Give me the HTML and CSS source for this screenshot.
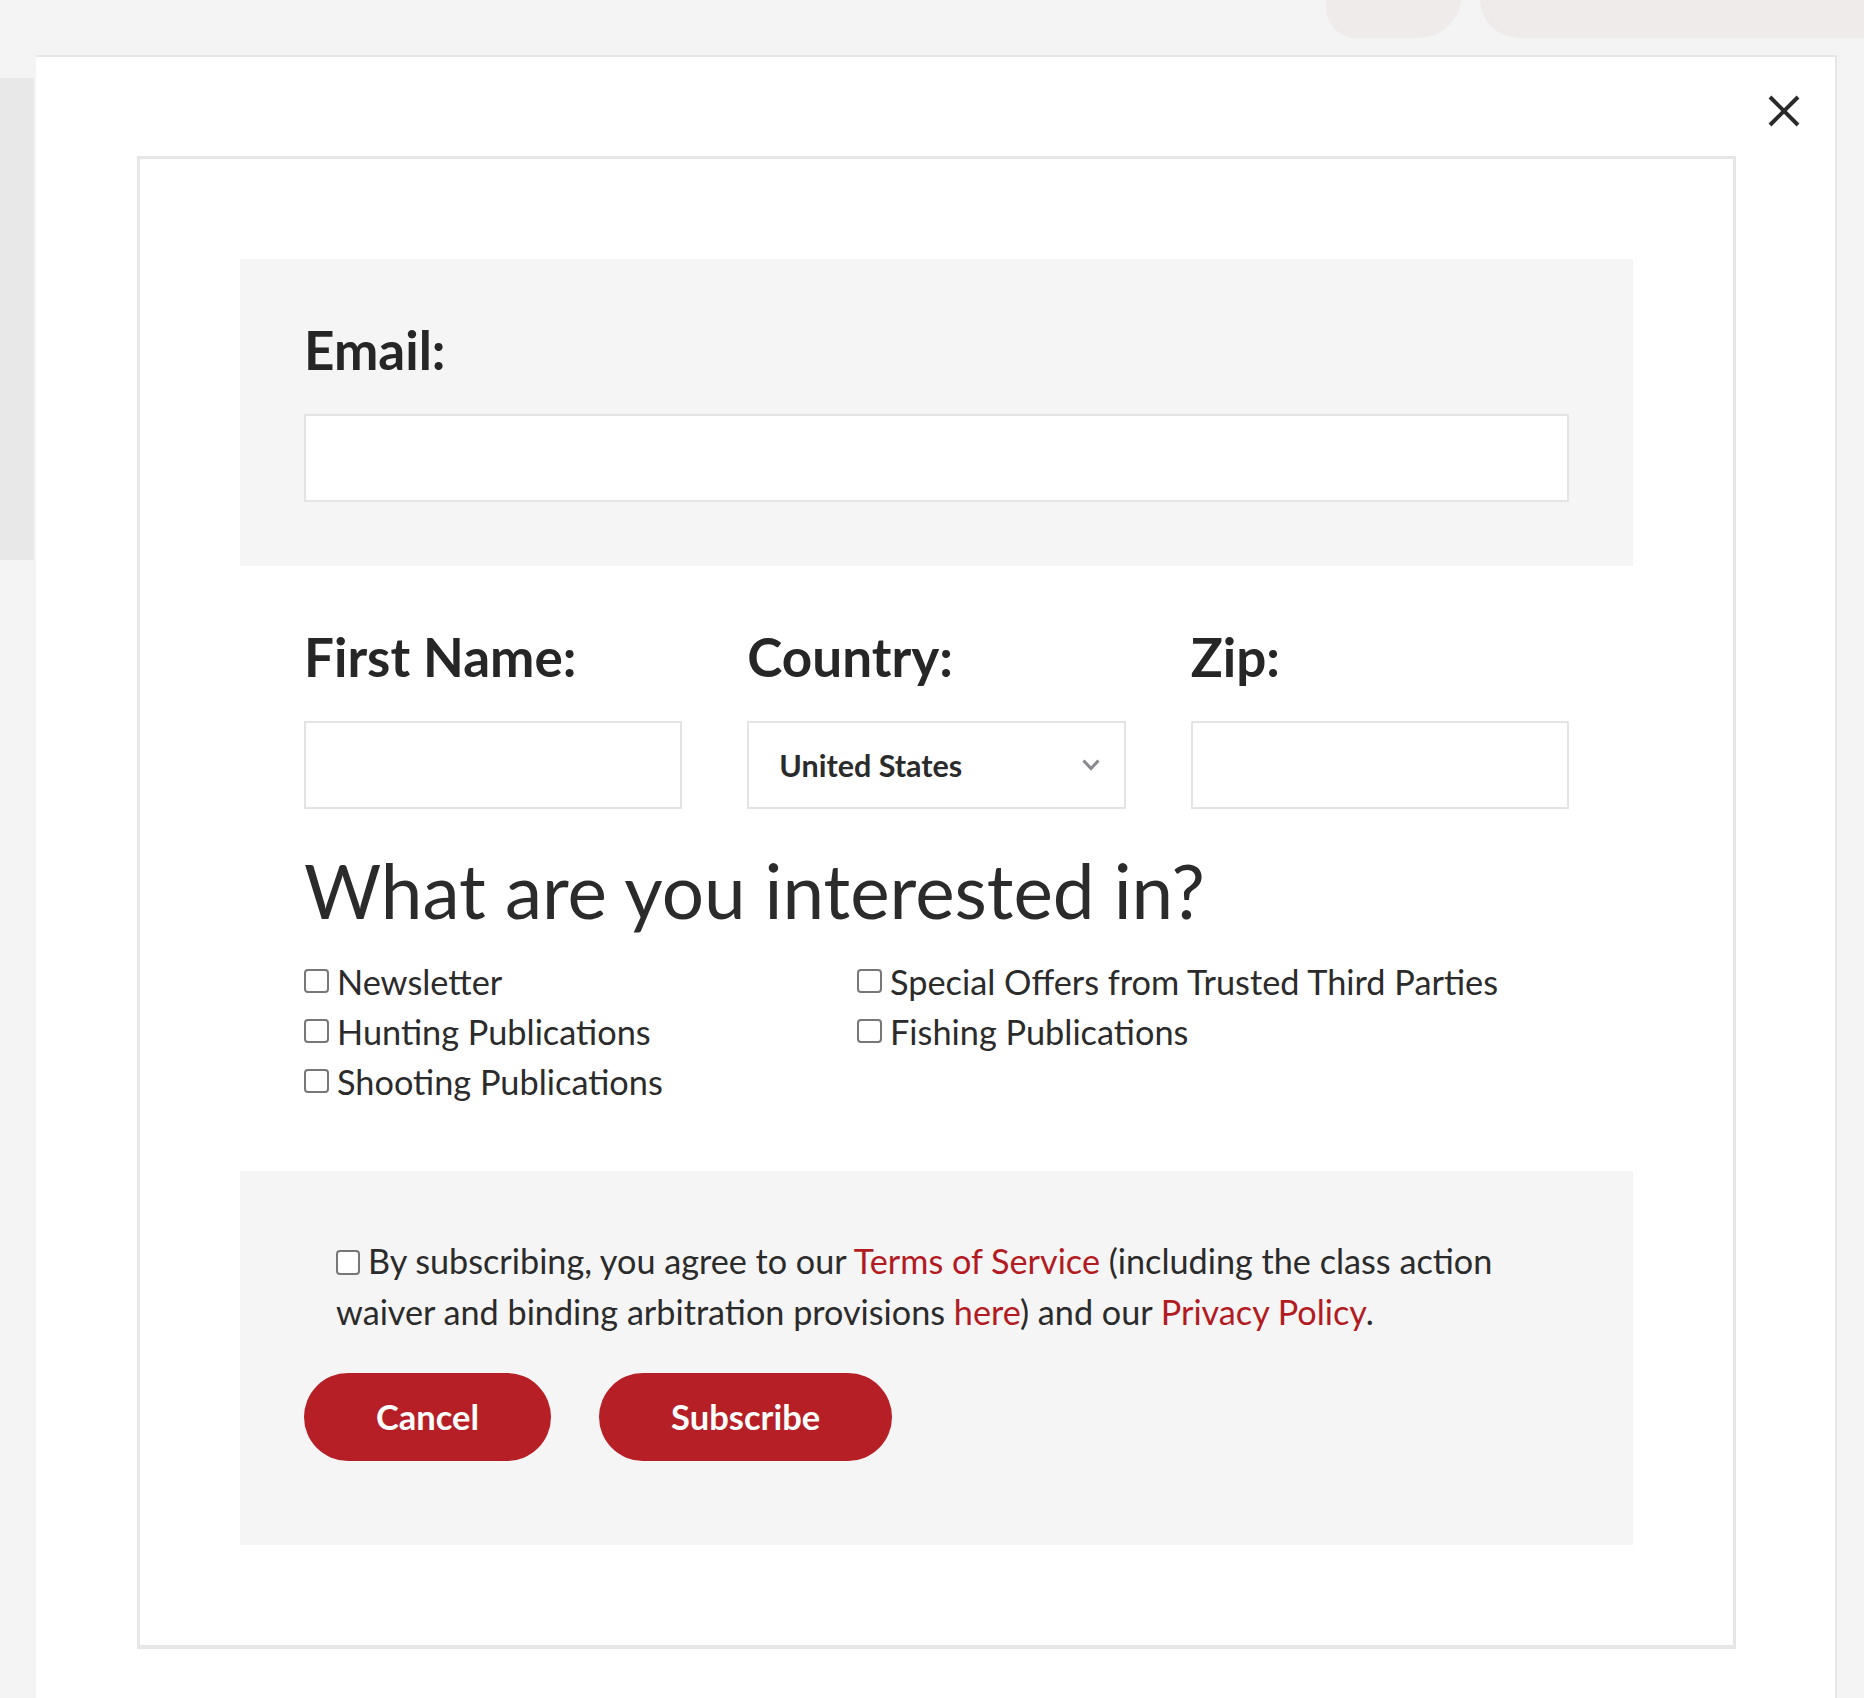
FILE: index.html
```html
<!DOCTYPE html>
<html lang="en">
<head>
<meta charset="utf-8">
<title>Subscribe</title>
<link rel="stylesheet" href="styles.css">
</head>
<body>
<div class="backdrop">
  <div class="bg-side"></div>
  <div class="bg-pill bg-pill-a"></div>
  <div class="bg-pill bg-pill-b"></div>
</div>
<div class="modal">
  <button class="close" type="button" aria-label="Close">
    <svg width="32" height="32" viewBox="0 0 32 32"><path d="M2 2 L30 30 M30 2 L2 30" stroke="#2a2a2a" stroke-width="4" fill="none"/></svg>
  </button>
  <div class="frame">
    <form class="form">
      <div class="panel panel-grey">
        <label class="field-label" for="email">Email:</label>
        <div class="text-input" id="email"></div>
      </div>
      <div class="panel panel-white">
        <div class="row3">
          <div class="field">
            <label class="field-label">First Name:</label>
            <div class="text-input"></div>
          </div>
          <div class="field">
            <label class="field-label">Country:</label>
            <div class="select">
              <span class="select-value">United States</span>
              <svg class="chevron" width="18" height="12" viewBox="0 0 18 12"><path d="M1.5 1.5 L9 9.5 L16.5 1.5" stroke="#8a8a8e" stroke-width="3" fill="none"/></svg>
            </div>
          </div>
          <div class="field">
            <label class="field-label">Zip:</label>
            <div class="text-input"></div>
          </div>
        </div>
        <h2 class="interest-title">What are you interested in?</h2>
        <div class="interests">
          <label class="check"><span class="box"></span>Newsletter</label>
          <label class="check"><span class="box"></span>Special Offers from Trusted Third Parties</label>
          <label class="check"><span class="box"></span>Hunting Publications</label>
          <label class="check"><span class="box"></span>Fishing Publications</label>
          <label class="check"><span class="box"></span>Shooting Publications</label>
        </div>
      </div>
      <div class="panel panel-grey panel-terms">
        <p class="terms"><span class="box box-terms"></span>By subscribing, you agree to our <a href="#">Terms of Service</a> (including the class action waiver and binding arbitration provisions <a href="#">here</a>) and our <a href="#">Privacy Policy</a>.</p>
        <div class="buttons">
          <button class="btn" type="button">Cancel</button>
          <button class="btn" type="button">Subscribe</button>
        </div>
      </div>
    </form>
  </div>
</div>
</body>
</html>
```

FILE: styles.css
```css
* { box-sizing: border-box; }
html, body { margin: 0; padding: 0; }
body {
  width: 1864px;
  height: 1698px;
  overflow: hidden;
  background: #f4f4f4;
  font-family: Lato, "Open Sans", sans-serif;
  color: #2b2b2b;
  position: relative;
}
.backdrop { position: absolute; left: 0; top: 0; right: 0; bottom: 0; }
.bg-side { position: absolute; left: 0; top: 78px; width: 34px; height: 482px; background: #e8e8e8; }
.bg-pill { position: absolute; top: -40px; height: 78px; background: #eeebea; }
.bg-pill-a { left: 1326px; width: 136px; border-radius: 0 0 44px 30px; }
.bg-pill-b { left: 1480px; width: 440px; border-radius: 44px; }

.modal {
  position: relative;
  margin: 55px 0 0 36px;
  width: 1801px;
  min-height: 1700px;
  background: #fff;
  border-top: 2px solid #e6e6e6;
  border-right: 2px solid #e6e6e6;
  padding: 99px 99px 100px 101px;
}
.close {
  position: absolute;
  right: 35px;
  top: 38px;
  width: 32px;
  height: 32px;
  padding: 0;
  border: 0;
  background: none;
  display: block;
}
.close svg { display: block; }

.frame {
  border: 3px solid #e6e6e6;
  box-shadow: 0 1px 0 #e6e6e6;
  padding: 100px;
}
.form { margin: 0; }
.panel { padding: 64px; }
.panel-grey { background: #f5f5f5; }

.field-label {
  display: block;
  font-weight: 700;
  font-size: 53px;
  line-height: 1;
  color: #262626;
  margin-bottom: 38px;
}
.text-input {
  height: 88px;
  background: #fff;
  border: 2px solid #e4e4e4;
}
.row3 {
  display: grid;
  grid-template-columns: repeat(3, 1fr);
  column-gap: 65px;
}
.select {
  height: 88px;
  background: #fff;
  border: 2px solid #e4e4e4;
  display: flex;
  align-items: center;
  justify-content: space-between;
  padding: 0 24px 0 30px;
}
.select-value { font-weight: 700; font-size: 30.5px; color: #2b2b2b; }
.chevron { display: block; }

.interest-title {
  font-weight: 400;
  font-size: 74.6px;
  line-height: 1;
  margin: 44px 0 29px;
  color: #2b2b2b;
}
.interests {
  display: grid;
  grid-template-columns: 553px 1fr;
}
.check {
  display: block;
  font-size: 34.3px;
  line-height: 50px;
  color: #2b2b2b;
  white-space: nowrap;
}
.box {
  display: inline-block;
  width: 25px;
  height: 24px;
  border: 2px solid #777;
  border-radius: 4px;
  background: #fff;
  margin-right: 8px;
  vertical-align: 2px;
}
.panel-terms { padding-bottom: 84px; }
.terms {
  margin: 0;
  padding: 0 0 0 32px;
  font-size: 34.2px;
  line-height: 51px;
  color: #2b2b2b;
}
.box-terms { width: 24px; height: 25px; vertical-align: -1px; }
.terms a { color: #b31b22; text-decoration: none; }
.buttons { display: flex; gap: 48px; margin-top: 36px; }
.btn {
  height: 88px;
  padding: 0 72px;
  border: 0;
  border-radius: 44px;
  background: #b61f26;
  color: #fff;
  font-family: Lato, "Open Sans", sans-serif;
  font-weight: 700;
  font-size: 34.5px;
}
```
